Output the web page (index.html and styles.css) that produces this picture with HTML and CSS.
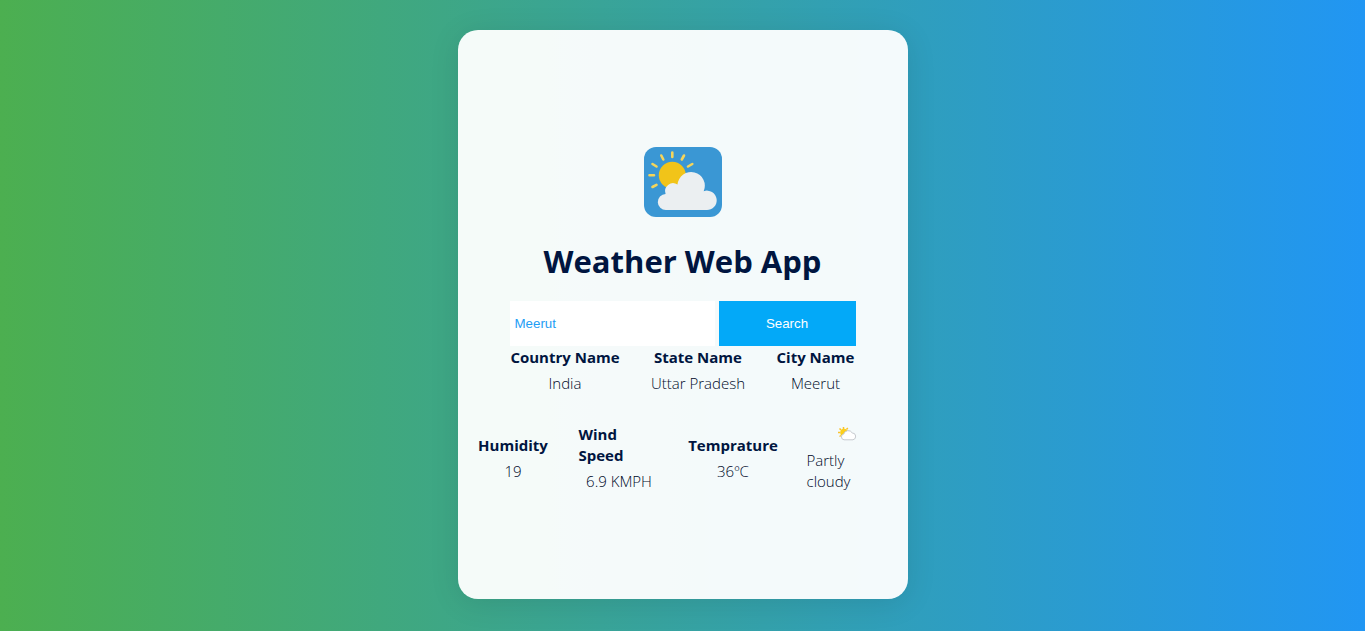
FILE: index.html
```html
<!DOCTYPE html>
<html lang="en">
<head>
<meta charset="utf-8">
<meta name="viewport" content="width=device-width, initial-scale=1">
<title>Weather Web App</title>
<link rel="stylesheet" href="styles.css">
</head>
<body>
<main class="card">
  <svg class="logo" viewBox="0 0 100 90" role="img" aria-label="Partly cloudy">
    <rect x="11" y="10" width="78" height="70" rx="12" fill="#3a97d4"/>
    <g stroke="#f4d55b" stroke-width="2.6" stroke-linecap="round">
      <path d="M39.300 15.500v4.500M28.300 18.500l2 4M51 18.500l-2.200 4M19.500 27l4 2.500M59.300 27l-4.300 2.500M16.500 38.300h4.500M19.500 50l4-2.200"/>
    </g>
    <circle cx="39.300" cy="38.300" r="13.500" fill="#f1c419"/>
    <path fill="#ebeff1" d="M33 73a8 8 0 0 1-.4-16A8 8 0 0 1 44.500 47.500a13.700 13.700 0 1 1 26.200 6.700A9.700 9.700 0 1 1 73.500 73z"/>
  </svg>
  <h1 class="title">Weather Web App</h1>
  <form class="search">
    <input class="search-input" type="text" aria-label="City" value="Meerut">
    <button class="search-button" type="button">Search</button>
  </form>
  <section class="place">
    <div class="item"><h2 class="label">Country Name</h2><p class="value">India</p></div>
    <div class="item"><h2 class="label">State Name</h2><p class="value">Uttar Pradesh</p></div>
    <div class="item"><h2 class="label">City Name</h2><p class="value">Meerut</p></div>
  </section>
  <section class="conditions">
    <div class="item"><h2 class="label">Humidity</h2><p class="value">19</p></div>
    <div class="item"><h2 class="label wide">Wind<br>Speed</h2><p class="value">6.9 KMPH</p></div>
    <div class="item"><h2 class="label">Temprature</h2><p class="value">36ºC</p></div>
    <div class="item">
      <svg class="condition-icon" viewBox="0 0 20 20" aria-hidden="true">
        <path d="M6.500 2v2M2.500 3.500l1.500 1.400M10.800 3l-1.300 1.500M1 7.500h2M2.500 11.500l1.500-1" stroke="#f9c22e" stroke-width="1.500"/>
        <circle cx="7" cy="7.500" r="3.800" fill="#fccf1c"/>
        <path d="M7 14.800a3 3 0 0 1-.2-5.900 4.600 4.600 0 0 1 8.400-1 3.500 3.500 0 0 1 .8 6.900z" fill="#fff" stroke="#c6cacf" stroke-width="1"/>
      </svg>
      <p class="value wide">Partly<br>cloudy</p>
    </div>
  </section>
</main>
</body>
</html>
```
FILE: styles.css
```css
* {
  box-sizing: border-box;
  margin: 0;
  padding: 0;
}

body {
  min-height: 100vh;
  padding: 30px 20px 32px;
  display: flex;
  justify-content: center;
  background: linear-gradient(to right, #4caf50, #2196f3);
  color: #001540;
  font-family: "Segoe UI", "Open Sans", "Noto Sans", sans-serif;
  font-size: 15px;
  line-height: 21px;
}

.card {
  width: 100%;
  max-width: 450px;
  padding: 20px;
  display: flex;
  flex-direction: column;
  align-items: center;
  justify-content: center;
  background: rgba(255, 255, 255, 0.95);
  border-radius: 20px;
  box-shadow: 0 4px 30px rgba(0, 0, 0, 0.1);
}

.logo {
  width: 100px;
  height: 90px;
}

.title {
  margin: 12px 0 18px;
  font-size: 31px;
  font-weight: 700;
  line-height: 44px;
}

.search {
  display: flex;
  gap: 4px;
  height: 45px;
}

.search-input,
.search-button {
  border: none;
  font-family: "Liberation Sans", Arial, sans-serif;
}

.search-input {
  width: 205px;
  padding: 0 5px;
  background: #fff;
  color: #1e9df5;
}

.search-button {
  width: 137px;
  background: #03a9f8;
  color: #fff;
}

.place,
.conditions {
  display: grid;
  column-gap: 30px;
  align-items: center;
}

.place {
  grid-template-columns: 110px 96px 79px;
  margin: 1px 0 30px;
}

.conditions {
  grid-template-columns: 71px 81px 87px 81px;
}

.item {
  display: flex;
  flex-direction: column;
  align-items: center;
  gap: 5px;
  white-space: nowrap;
}

.label {
  font-size: 15px;
  font-weight: 700;
}

.value {
  color: #000a2a;
  font-weight: 300;
}

.wide {
  width: 100%;
}

.condition-icon {
  width: 20px;
  height: 20px;
}
```
